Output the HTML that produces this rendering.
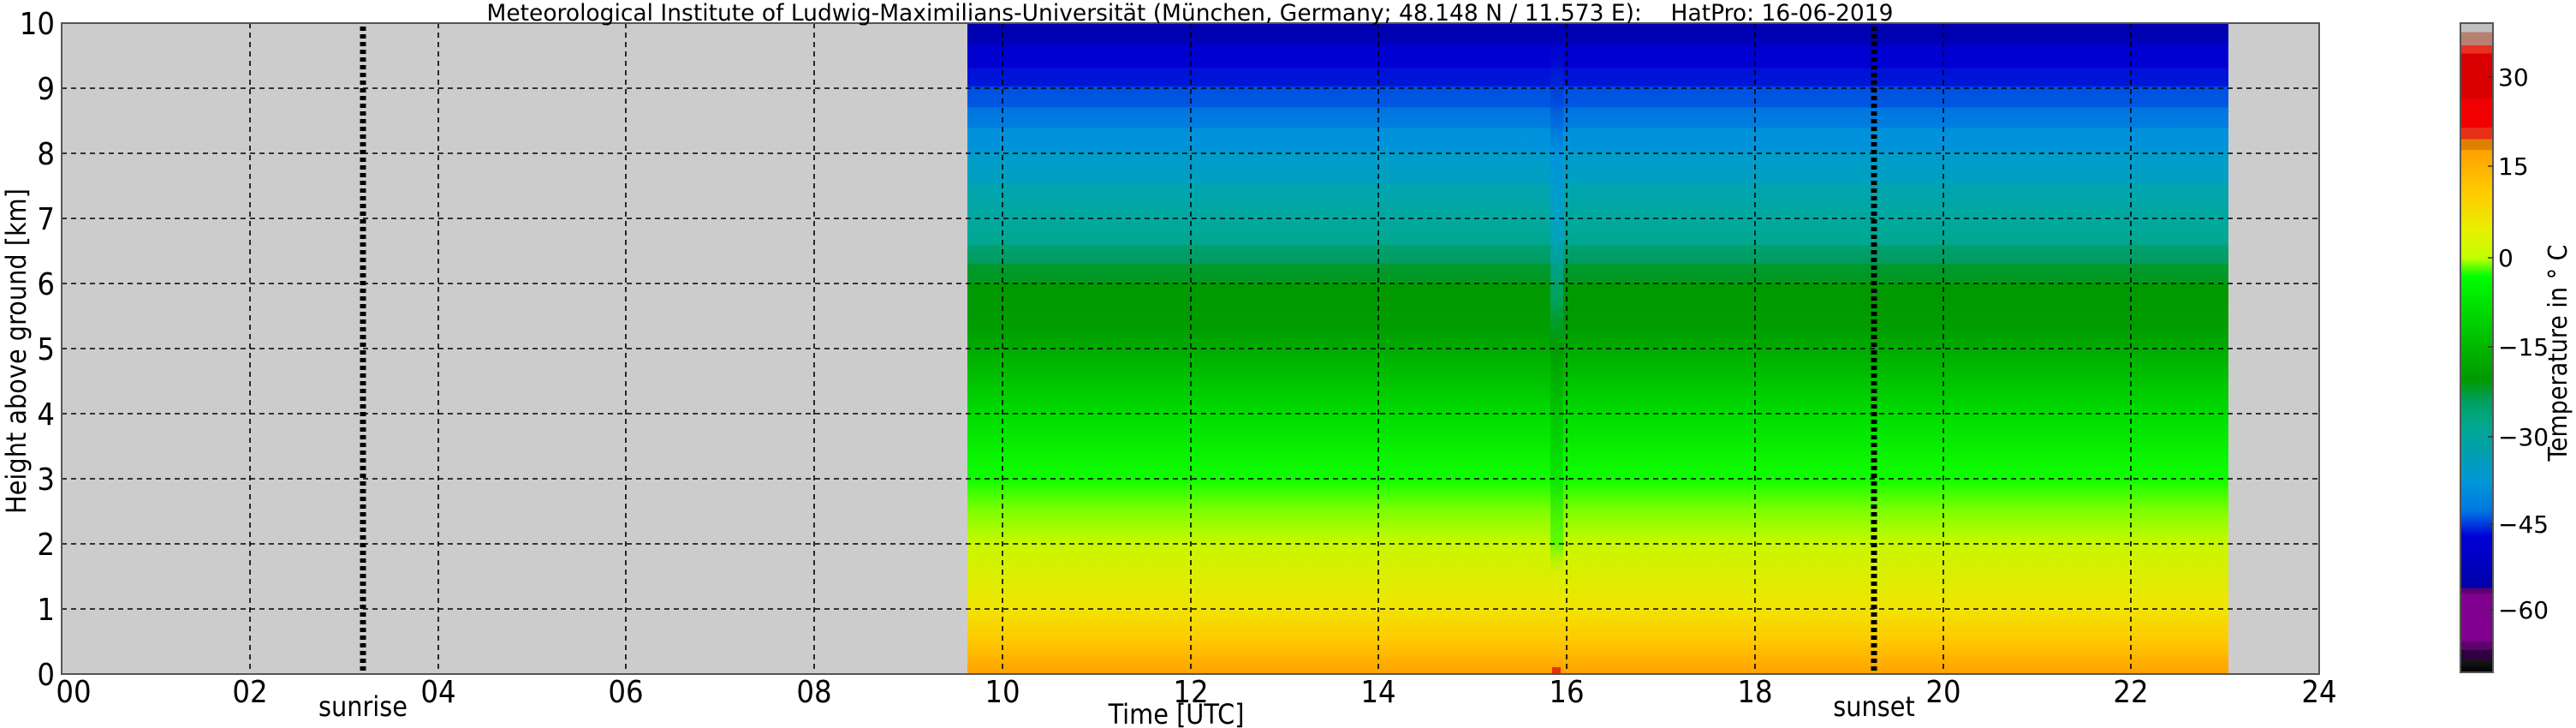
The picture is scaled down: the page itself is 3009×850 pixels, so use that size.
<!DOCTYPE html>
<html><head><meta charset="utf-8"><style>
html,body{margin:0;padding:0;background:#fff;}
svg{display:block;}
text{font-family:"DejaVu Sans","Liberation Sans",sans-serif;fill:#000;}
.c{font-family:"DejaVu Sans Condensed","DejaVu Sans","Liberation Sans Narrow",sans-serif;}
</style></head><body>
<svg width="3009" height="850" viewBox="0 0 3009 850" xmlns="http://www.w3.org/2000/svg">
<defs>
<linearGradient id="dg" x1="0" y1="0" x2="0" y2="1">
<stop offset="0" stop-color="#0000b0"/>
<stop offset="0.032" stop-color="#0000b4"/>
<stop offset="0.033" stop-color="#0000d0"/>
<stop offset="0.068" stop-color="#0000d4"/>
<stop offset="0.069" stop-color="#0010d8"/>
<stop offset="0.097" stop-color="#0018d8"/>
<stop offset="0.098" stop-color="#0050e0"/>
<stop offset="0.129" stop-color="#0058e0"/>
<stop offset="0.13" stop-color="#0074e0"/>
<stop offset="0.161" stop-color="#0080e0"/>
<stop offset="0.162" stop-color="#0090dc"/>
<stop offset="0.197" stop-color="#0094d8"/>
<stop offset="0.198" stop-color="#009ccc"/>
<stop offset="0.247" stop-color="#00a0c0"/>
<stop offset="0.248" stop-color="#00a4b0"/>
<stop offset="0.297" stop-color="#00a8a0"/>
<stop offset="0.34" stop-color="#00a890"/>
<stop offset="0.341" stop-color="#00a070"/>
<stop offset="0.369" stop-color="#009c60"/>
<stop offset="0.37" stop-color="#009930"/>
<stop offset="0.398" stop-color="#009920"/>
<stop offset="0.4" stop-color="#009900"/>
<stop offset="0.462" stop-color="#009c00"/>
<stop offset="0.5" stop-color="#00aa00"/>
<stop offset="0.6" stop-color="#00dc00"/>
<stop offset="0.7" stop-color="#10ff00"/>
<stop offset="0.75" stop-color="#80ff00"/>
<stop offset="0.8" stop-color="#c8f800"/>
<stop offset="0.9" stop-color="#f0e400"/>
<stop offset="0.95" stop-color="#ffc800"/>
<stop offset="1" stop-color="#ffa000"/>
</linearGradient>
<linearGradient id="cb" x1="0" y1="0" x2="0" y2="1">
<stop offset="0" stop-color="#c0c0c0"/>
<stop offset="0.014" stop-color="#c0c0c0"/>
<stop offset="0.0141" stop-color="#b88070"/>
<stop offset="0.034" stop-color="#b88070"/>
<stop offset="0.0341" stop-color="#e83020"/>
<stop offset="0.047" stop-color="#e83020"/>
<stop offset="0.0471" stop-color="#d80000"/>
<stop offset="0.116" stop-color="#d80000"/>
<stop offset="0.1161" stop-color="#f00000"/>
<stop offset="0.161" stop-color="#f00000"/>
<stop offset="0.1611" stop-color="#e83018"/>
<stop offset="0.179" stop-color="#e83018"/>
<stop offset="0.1791" stop-color="#e08000"/>
<stop offset="0.195" stop-color="#e08000"/>
<stop offset="0.1951" stop-color="#ffa000"/>
<stop offset="0.263" stop-color="#ffcc00"/>
<stop offset="0.32" stop-color="#e8f000"/>
<stop offset="0.362" stop-color="#c0ff00"/>
<stop offset="0.39" stop-color="#00ff00"/>
<stop offset="0.46" stop-color="#00d000"/>
<stop offset="0.548" stop-color="#009900"/>
<stop offset="0.584" stop-color="#00a060"/>
<stop offset="0.62" stop-color="#00a890"/>
<stop offset="0.663" stop-color="#00a0b0"/>
<stop offset="0.706" stop-color="#0098d8"/>
<stop offset="0.75" stop-color="#0078e0"/>
<stop offset="0.77" stop-color="#0040e0"/>
<stop offset="0.79" stop-color="#0000d8"/>
<stop offset="0.87" stop-color="#0000a8"/>
<stop offset="0.871" stop-color="#600070"/>
<stop offset="0.878" stop-color="#600070"/>
<stop offset="0.879" stop-color="#800090"/>
<stop offset="0.952" stop-color="#800090"/>
<stop offset="0.953" stop-color="#600070"/>
<stop offset="0.965" stop-color="#600070"/>
<stop offset="0.966" stop-color="#300040"/>
<stop offset="0.98" stop-color="#300040"/>
<stop offset="0.981" stop-color="#181818"/>
<stop offset="1" stop-color="#000"/>
</linearGradient>
<linearGradient id="anom" x1="0" y1="0" x2="0" y2="1">
<stop offset="0" stop-color="#0000c0" stop-opacity="0"/>
<stop offset="0.12" stop-color="#0040d8" stop-opacity="0.6"/>
<stop offset="0.2" stop-color="#0090e0" stop-opacity="0.7"/>
<stop offset="0.32" stop-color="#00a0d0" stop-opacity="0.7"/>
<stop offset="0.42" stop-color="#00a8a0" stop-opacity="0.6"/>
<stop offset="0.5" stop-color="#009000" stop-opacity="0.5"/>
<stop offset="0.7" stop-color="#00d000" stop-opacity="0.5"/>
<stop offset="0.8" stop-color="#20ff00" stop-opacity="0.6"/>
<stop offset="0.85" stop-color="#c0f000" stop-opacity="0"/>
<stop offset="1" stop-color="#ffa000" stop-opacity="0"/>
</linearGradient>
</defs>

<rect x="72" y="27" width="2637" height="760" fill="#cccccc"/>
<rect x="1130" y="27" width="1473" height="760" fill="url(#dg)"/>
<rect x="1811" y="27" width="15" height="760" fill="url(#anom)"/>
<rect x="1813" y="779" width="10" height="8" fill="#e83010"/>

<g stroke="#000" stroke-width="1.6" stroke-dasharray="6,5" fill="none">
<path d="M72 103H2709M72 179H2709M72 255H2709M72 331H2709M72 407H2709M72 483H2709M72 559H2709M72 635H2709M72 711H2709M72 27H2709"/>
<path d="M292 27V787M512 27V787M731 27V787M951 27V787M1171 27V787M1391 27V787M1610 27V787M1830 27V787M2050 27V787M2270 27V787M2489 27V787"/>
</g>
<g stroke="#000" stroke-width="7" stroke-dasharray="5,4" fill="none">
<path d="M424 31V787M2189 31V787"/>
</g>
<rect x="72" y="27" width="2637" height="760" fill="none" stroke="#555" stroke-width="2"/>

<text x="1390" y="24" font-size="26.5" text-anchor="middle" xml:space="preserve">Meteorological Institute of Ludwig-Maximilians-Universität (München, Germany; 48.148 N / 11.573 E):    HatPro: 16-06-2019</text>

<g font-size="36" text-anchor="end">
<text class="c" x="64" y="40">10</text>
<text class="c" x="64" y="116">9</text>
<text class="c" x="64" y="192">8</text>
<text class="c" x="64" y="268">7</text>
<text class="c" x="64" y="344">6</text>
<text class="c" x="64" y="420">5</text>
<text class="c" x="64" y="496">4</text>
<text class="c" x="64" y="572">3</text>
<text class="c" x="64" y="648">2</text>
<text class="c" x="64" y="724">1</text>
<text class="c" x="64" y="800">0</text>
</g>
<g font-size="36" text-anchor="middle">
<text class="c" x="86" y="820">00</text>
<text class="c" x="292" y="820">02</text>
<text class="c" x="512" y="820">04</text>
<text class="c" x="731" y="820">06</text>
<text class="c" x="951" y="820">08</text>
<text class="c" x="1171" y="820">10</text>
<text class="c" x="1391" y="820">12</text>
<text class="c" x="1610" y="820">14</text>
<text class="c" x="1830" y="820">16</text>
<text class="c" x="2050" y="820">18</text>
<text class="c" x="2270" y="820">20</text>
<text class="c" x="2489" y="820">22</text>
<text class="c" x="2709" y="820">24</text>
</g>
<text class="c" x="424" y="836" font-size="32" text-anchor="middle">sunrise</text>
<text class="c" x="2189" y="836" font-size="32" text-anchor="middle">sunset</text>
<text class="c" x="1374" y="845" font-size="32" text-anchor="middle">Time [UTC]</text>
<text class="c" x="0" y="0" font-size="32" text-anchor="middle" transform="translate(30,410) rotate(-90)">Height above ground [km]</text>

<rect x="2874" y="27" width="38" height="758" fill="url(#cb)" stroke="#555" stroke-width="2"/>
<g stroke="#333" stroke-width="1.5">
<path d="M2906 90H2912M2906 194H2912M2906 301H2912M2906 405H2912M2906 510H2912M2906 612H2912M2906 712H2912"/>
</g>
<g font-size="28">
<text x="2918" y="100">30</text>
<text x="2918" y="204">15</text>
<text x="2918" y="311">0</text>
<text x="2918" y="415">−15</text>
<text x="2918" y="520">−30</text>
<text x="2918" y="622">−45</text>
<text x="2918" y="722">−60</text>
</g>
<text class="c" x="0" y="0" font-size="30" text-anchor="middle" transform="translate(2998,412) rotate(-90)">Temperature in ° C</text>
</svg>
</body></html>
